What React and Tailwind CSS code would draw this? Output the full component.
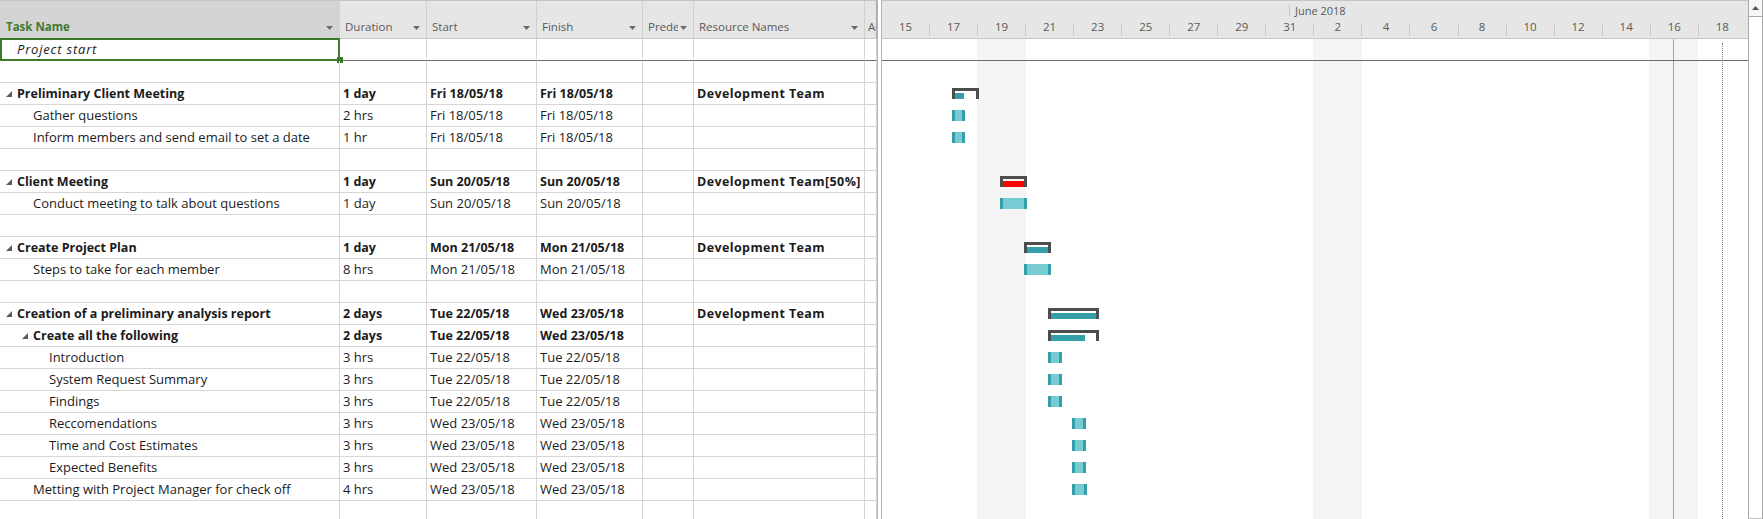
import React from "react";

const COLS = "grid grid-cols-[340px_87px_110px_106px_51px_171px_12px]";
const GANTT_LEFT = 882;

const INDENT = { 1: "pl-[6px]", 2: "pl-[22px]", 3: "pl-[38px]" };

const rows = [
  { name: "Project start", level: 1, italic: true, first: true },
  {},
  { name: "Preliminary Client Meeting", level: 1, summary: true, dur: "1 day", start: "Fri 18/05/18", finish: "Fri 18/05/18", res: "Development Team", bar: { kind: "summary", x: 952, w: 27, fill: 9 } },
  { name: "Gather questions", level: 2, dur: "2 hrs", start: "Fri 18/05/18", finish: "Fri 18/05/18", bar: { kind: "task", x: 952, w: 13 } },
  { name: "Inform members and send email to set a date", level: 2, dur: "1 hr", start: "Fri 18/05/18", finish: "Fri 18/05/18", bar: { kind: "task", x: 952, w: 13 } },
  {},
  { name: "Client Meeting", level: 1, summary: true, dur: "1 day", start: "Sun 20/05/18", finish: "Sun 20/05/18", res: "Development Team[50%]", bar: { kind: "summary", x: 1000, w: 27, fill: 21, red: true } },
  { name: "Conduct meeting to talk about questions", level: 2, dur: "1 day", start: "Sun 20/05/18", finish: "Sun 20/05/18", bar: { kind: "task", x: 1000, w: 27 } },
  {},
  { name: "Create Project Plan", level: 1, summary: true, dur: "1 day", start: "Mon 21/05/18", finish: "Mon 21/05/18", res: "Development Team", bar: { kind: "summary", x: 1024, w: 27, fill: 21 } },
  { name: "Steps to take for each member", level: 2, dur: "8 hrs", start: "Mon 21/05/18", finish: "Mon 21/05/18", bar: { kind: "task", x: 1024, w: 27 } },
  {},
  { name: "Creation of a preliminary analysis report", level: 1, summary: true, dur: "2 days", start: "Tue 22/05/18", finish: "Wed 23/05/18", res: "Development Team", bar: { kind: "summary", x: 1048, w: 51, fill: 45 } },
  { name: "Create all the following", level: 2, summary: true, dur: "2 days", start: "Tue 22/05/18", finish: "Wed 23/05/18", bar: { kind: "summary", x: 1048, w: 51, fill: 34 } },
  { name: "Introduction", level: 3, dur: "3 hrs", start: "Tue 22/05/18", finish: "Tue 22/05/18", bar: { kind: "task", x: 1048, w: 14 } },
  { name: "System Request Summary", level: 3, dur: "3 hrs", start: "Tue 22/05/18", finish: "Tue 22/05/18", bar: { kind: "task", x: 1048, w: 14 } },
  { name: "Findings", level: 3, dur: "3 hrs", start: "Tue 22/05/18", finish: "Tue 22/05/18", bar: { kind: "task", x: 1048, w: 14 } },
  { name: "Reccomendations", level: 3, dur: "3 hrs", start: "Wed 23/05/18", finish: "Wed 23/05/18", bar: { kind: "task", x: 1072, w: 14 } },
  { name: "Time and Cost Estimates", level: 3, dur: "3 hrs", start: "Wed 23/05/18", finish: "Wed 23/05/18", bar: { kind: "task", x: 1072, w: 14 } },
  { name: "Expected Benefits", level: 3, dur: "3 hrs", start: "Wed 23/05/18", finish: "Wed 23/05/18", bar: { kind: "task", x: 1072, w: 14 } },
  { name: "Metting with Project Manager for check off", level: 2, dur: "4 hrs", start: "Wed 23/05/18", finish: "Wed 23/05/18", bar: { kind: "task", x: 1072, w: 15 } },
  {},
];

const days = [15, 17, 19, 21, 23, 25, 27, 29, 31, 2, 4, 6, 8, 10, 12, 14, 16, 18];

const Arrow = () => (
  <svg width="7" height="4" viewBox="0 0 7 4" className="shrink-0">
    <polygon points="0,0 7,0 3.5,4" fill="#6b6b6b" />
  </svg>
);

const Collapse = () => (
  <svg width="6" height="6" viewBox="0 0 6 6">
    <polygon points="6,0 6,6 0,6" fill="#5b5b5b" />
  </svg>
);

const HeadCell = ({ label, green, noArrow }) => (
  <div
    className={`flex h-full items-start gap-[2px] overflow-hidden border-r border-[#d0d0d0] pt-[18px] pr-[6px] ${
      green ? "bg-[#d4d4d4] pl-[6px]" : "bg-[#e6e6e6] pl-[5px]"
    }`}
  >
    <span
      className={`min-w-0 flex-1 overflow-hidden whitespace-nowrap leading-[16px] ${
        green ? "text-[11.5px] font-bold text-[#41792f]" : "text-[#595959]"
      }`}
    >
      {label}
    </span>
    {!noArrow && (
      <div className="mt-[7px]">
        <Arrow />
      </div>
    )}
  </div>
);

const Cell = ({ children, bold, dark, wide }) => (
  <div
    className={`flex items-center overflow-hidden whitespace-nowrap border-r border-b border-[#d6d6d6] pt-[1px] pl-[3px] ${
      bold ? "text-[12.5px] font-bold" : "text-[13px]"
    } ${wide ? "tracking-[0.4px]" : ""} ${dark ? "border-b-[#6b6b6b]" : ""}`}
  >
    {children}
  </div>
);

const TableRow = ({ r }) => (
  <div className={`${COLS} h-[22px]`}>
    <div
      className={`relative flex items-center whitespace-nowrap border-r border-b border-[#d6d6d6] pt-[1px] ${
        INDENT[r.level || 1]
      } ${r.summary ? "text-[12.5px] font-bold" : "text-[13px]"} ${r.italic ? "italic tracking-[0.8px]" : ""}`}
    >
      <div className="flex w-[11px] items-center">{r.summary && <Collapse />}</div>
      <span>{r.name}</span>
      {r.first && (
        <>
          <div className="absolute -top-[1px] left-0 -right-[1px] -bottom-[1px] border-2 border-[#3b7a2d]" />
          <div className="absolute -right-[4px] -bottom-[3px] h-[6px] w-[6px] bg-[#3b7a2d]" />
        </>
      )}
    </div>
    <Cell bold={r.summary} dark={r.first}>{r.dur}</Cell>
    <Cell bold={r.summary} dark={r.first}>{r.start}</Cell>
    <Cell bold={r.summary} dark={r.first}>{r.finish}</Cell>
    <Cell dark={r.first} />
    <Cell bold={r.summary} dark={r.first} wide>{r.res}</Cell>
    <Cell dark={r.first} />
  </div>
);

const Bar = ({ bar }) => {
  if (!bar) return null;
  const left = bar.x - GANTT_LEFT;
  if (bar.kind === "summary") {
    return (
      <div
        className="absolute top-[5px] h-[11px] border-x-[3px] border-t-[3px] border-[#4d4d4d]"
        style={{ left, width: bar.w }}
      >
        <div
          className={`mt-[2px] h-[6px] ${bar.red ? "bg-[#ff0000]" : "bg-[#33a0a9]"}`}
          style={{ width: bar.fill }}
        />
      </div>
    );
  }
  return (
    <div
      className="absolute top-[5px] h-[11px] border-x-[3px] border-[#33a0a9] bg-[#77cbd3]"
      style={{ left, width: bar.w }}
    />
  );
};

export default function App() {
  return (
    <div className="flex h-[519px] w-[1763px] overflow-hidden bg-white font-['Open_Sans',sans-serif] text-[11.5px] text-[#1b1b1b]">
      {/* sheet */}
      <div className="w-[877px] shrink-0">
        <div className={`${COLS} h-[39px] border-y border-[#c4c4c4]`}>
          <HeadCell label="Task Name" green />
          <HeadCell label="Duration" />
          <HeadCell label="Start" />
          <HeadCell label="Finish" />
          <HeadCell label="Predecessors" />
          <HeadCell label="Resource Names" />
          <div className="overflow-hidden border-r border-[#a9a9a9] bg-[#e6e6e6] pt-[18px] pl-[3px] leading-[16px] whitespace-nowrap text-[#595959]">
            Add New Column
          </div>
        </div>
        {rows.map((r, i) => (
          <TableRow key={i} r={r} />
        ))}
      </div>

      {/* split bar */}
      <div className="w-[5px] shrink-0 border-x border-[#b3b3b3] bg-white" />

      {/* gantt */}
      <div className="flex w-[866px] shrink-0 flex-col">
        <div className="h-[39px] border-y border-[#c4c4c4] bg-[#e6e6e6] text-[#595959]">
          <div className="flex h-[18px] items-start">
            <div className="w-[407px]" />
            <div className="mt-[4px] h-[11px] w-px bg-[#c4c4c4]" />
            <span className="mt-[3px] ml-[5px] text-[11px] leading-[14px]">June 2018</span>
          </div>
          <div className="grid h-[19px] grid-cols-[47px_repeat(17,48.06px)]">
            {days.map((d, i) => (
              <div key={i} className="flex">
                {i > 0 && <div className="mt-[4px] h-[13px] w-px bg-[#c8c8c8]" />}
                <span className="flex-1 text-center leading-[16px]">{d}</span>
              </div>
            ))}
          </div>
        </div>
        <div className="relative flex-1 overflow-hidden">
          <div className="absolute top-0 bottom-0 left-[95px] w-[49px] bg-[#f4f4f4]" />
          <div className="absolute top-0 bottom-0 left-[431px] w-[49px] bg-[#f4f4f4]" />
          <div className="absolute top-0 bottom-0 left-[767px] w-[49px] bg-[#f4f4f4]" />
          <div className="absolute top-0 bottom-0 left-[791px] w-px bg-[#7fbf7f]" />
          <div className="absolute top-[4px] bottom-0 left-[840px] border-l border-dotted border-[#7a7a7a]" />
          {rows.map((r, i) => (
            <div
              key={i}
              className={`relative h-[22px] ${i === 0 ? "border-b border-[#6b6b6b]" : ""}`}
            >
              <Bar bar={r.bar} />
            </div>
          ))}
        </div>
      </div>

      {/* scrollbar */}
      <div className="flex w-[15px] shrink-0 flex-col border-x border-[#a9a9a9] bg-white">
        <div className="flex h-[17px] items-center justify-center border-b border-[#a9a9a9] bg-[#f7f7f7]">
          <svg width="7" height="4" viewBox="0 0 7 4">
            <polygon points="0,4 7,4 3.5,0" fill="#555" />
          </svg>
        </div>
        <div className="flex-1 border-b border-[#c4c4c4] bg-white" />
      </div>
    </div>
  );
}
